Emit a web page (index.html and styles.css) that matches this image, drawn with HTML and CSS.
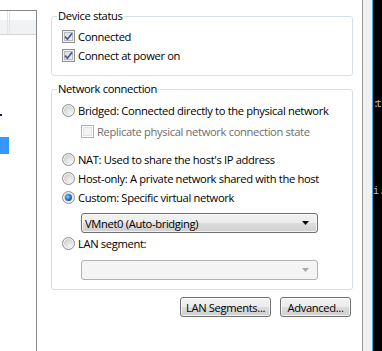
FILE: index.html
```html
<!DOCTYPE html>
<html lang="en">
<head>
    <meta charset="UTF-8">
    <title>Network Adapter</title>
    <link rel="stylesheet" href="styles.css">
</head>
<body>
    <div class="window">
        <aside class="device-list">
            <div class="list-header">
                <span class="col col-a"></span>
                <span class="col col-b"></span>
            </div>
            <div class="list-body">
                <span class="stray-dot"></span>
                <span class="selected-row"></span>
            </div>
        </aside>

        <main class="settings">
            <fieldset class="group">
                <legend>Device status</legend>
                <div class="group-body status-body">
                    <label class="option">
                        <span class="check"><svg width="9" height="9" viewBox="0 0 9 9"><path d="M1 4.6 L3.4 7.2 L8 1.4" fill="none" stroke="#4b5c98" stroke-width="1.7"/></svg></span>
                        Connected
                    </label>
                    <label class="option">
                        <span class="check"><svg width="9" height="9" viewBox="0 0 9 9"><path d="M1 4.6 L3.4 7.2 L8 1.4" fill="none" stroke="#4b5c98" stroke-width="1.7"/></svg></span>
                        Connect at power on
                    </label>
                </div>
            </fieldset>

            <fieldset class="group network">
                <legend>Network connection</legend>
                <div class="group-body network-body">
                    <label class="option"><span class="radio"></span>Bridged: Connected directly to the physical network</label>
                    <label class="option sub disabled"><span class="check off"></span>Replicate physical network connection state</label>
                    <label class="option nat"><span class="radio"></span>NAT: Used to share the host's IP address</label>
                    <label class="option"><span class="radio"></span>Host-only: A private network shared with the host</label>
                    <label class="option"><span class="radio on"></span>Custom: Specific virtual network</label>
                    <div class="select first">
                        <span>VMnet0 (Auto-bridging)</span>
                        <svg width="7" height="4" viewBox="0 0 7 4"><path d="M0 0h7l-3.5 4z" fill="#000"/></svg>
                    </div>
                    <label class="option lan"><span class="radio"></span>LAN segment:</label>
                    <div class="select second off">
                        <span></span>
                        <svg width="7" height="4" viewBox="0 0 7 4"><path d="M0 0h7l-3.5 4z" fill="#a8a8a8"/></svg>
                    </div>
                </div>
            </fieldset>

            <div class="actions">
                <button class="btn lan-btn">LAN Segments...</button>
                <button class="btn adv-btn">Advanced...</button>
            </div>
        </main>

        <div class="edge"></div>
        <div class="terminal">
            <span class="term-line">:t</span>
            <span class="term-line second-line">i .</span>
        </div>
    </div>
</body>
</html>
```

FILE: styles.css
```css
* {
    box-sizing: border-box;
}
html, body {
    margin: 0;
}
body {
    width: 382px;
    height: 351px;
    overflow: hidden;
    background: #fff;
    font-family: "Open Sans", "Noto Sans", sans-serif;
    font-size: 11.2px;
    letter-spacing: -0.35px;
    color: #000;
}
.window {
    display: flex;
    height: 351px;
}

/* left list pane */
.device-list {
    flex: none;
    width: 37px;
    margin-top: 10px;
    border-top: 1px solid #828790;
    border-right: 1px solid #828790;
}
.list-header {
    display: flex;
    height: 24px;
    border-bottom: 1px solid #d5d5d5;
    background: linear-gradient(#fff 0, #fff 38%, #f1f2f4 38%, #f1f2f4 100%);
}
.list-header .col {
    border-right: 1px solid #e3e4e6;
}
.col-a {
    width: 8px;
}
.col-b {
    width: 2px;
}
.list-body {
    display: flex;
    flex-direction: column;
}
.stray-dot {
    width: 2px;
    height: 2px;
    margin-top: 79px;
    background: #1a1a5a;
}
.selected-row {
    width: 9px;
    height: 17px;
    margin-top: 21px;
    background: #3399ff;
}

/* settings */
.settings {
    flex: none;
    width: 325px;
    padding: 9px 9px 0 14px;
}
.group {
    margin: 0;
    padding: 0;
    min-width: 0;
    border: 1px solid #d5dfe5;
    border-radius: 3px;
}
.group legend {
    margin-left: 5px;
    padding: 0 1px;
    line-height: 14px;
}
.group.network {
    margin-top: 6px;
}
.group-body {
    padding-left: 10px;
}
.status-body {
    padding-top: 4px;
    padding-bottom: 10px;
}
.network-body {
    padding-top: 5px;
    padding-bottom: 9px;
}
.option {
    display: flex;
    align-items: center;
    gap: 3px;
    height: 19px;
    white-space: nowrap;
}
.option.sub {
    margin: 2px 0 0 19px;
}
.option.nat {
    margin-top: 9px;
}
.option.lan {
    margin-top: 1px;
}
.disabled {
    color: #6d6d6d;
}

.check {
    flex: none;
    display: flex;
    align-items: center;
    justify-content: center;
    width: 13px;
    height: 13px;
    border: 1px solid #8e8f8f;
    background: linear-gradient(135deg, #d6d9de, #f6f7f8);
    box-shadow: inset 0 0 0 1px #f2f2f2, inset 0 0 0 2px #b5bac1;
}
.check.off {
    border-color: #b1b1b1;
    background: #f4f4f4;
    box-shadow: inset 0 0 0 1px #fff, inset 0 0 0 2px #e3e3e3;
}
.radio {
    flex: none;
    position: relative;
    width: 13px;
    height: 13px;
    border-radius: 50%;
    border: 1px solid #8e8f8f;
    background: radial-gradient(circle at 65% 70%, #f4f4f4 0, #dcdcdc 45%, #cfcfcf 70%);
    box-shadow: inset 0 0 0 1px #f6f6f6;
}
.radio.on::after {
    content: "";
    position: absolute;
    left: 2px;
    top: 2px;
    width: 7px;
    height: 7px;
    border-radius: 50%;
    background: radial-gradient(circle at 40% 40%, #8fd0ff 0, #2a78c8 45%, #0c3478 100%);
}

.select {
    display: flex;
    align-items: center;
    justify-content: space-between;
    width: 237px;
    height: 20px;
    margin-left: 19px;
    padding: 0 8px 0 3px;
    border: 1px solid #707070;
    border-radius: 3px;
    background: linear-gradient(#f2f2f2 0, #ebebeb 50%, #dddddd 50%, #cfcfcf 100%);
    box-shadow: inset 0 0 0 1px rgba(255, 255, 255, 0.7);
}
.select.first {
    margin-top: 6px;
}
.select.second {
    margin-top: 7px;
}
.select.off {
    border-color: #adb2b5;
    background: #f4f4f4;
    box-shadow: none;
}

.actions {
    display: flex;
    justify-content: flex-end;
    gap: 9px;
    margin: 7px 2px 0 0;
}
.btn {
    height: 20px;
    padding: 0;
    font: inherit;
    letter-spacing: inherit;
    color: #000;
    border: 1px solid #707070;
    border-radius: 3px;
    background: linear-gradient(#f2f2f2 0, #ebebeb 50%, #dddddd 50%, #cfcfcf 100%);
    box-shadow: inset 0 0 0 1px rgba(255, 255, 255, 0.7);
}
.lan-btn {
    width: 91px;
}
.adv-btn {
    width: 71px;
}

/* right window edge and the terminal behind it */
.edge {
    flex: none;
    width: 11px;
    border-left: 1px solid #9a9a9a;
    border-right: 1px solid #3fa9e8;
    background: #f0f0f0;
}
.terminal {
    flex: none;
    width: 9px;
    display: flex;
    flex-direction: column;
    padding-top: 99px;
    background: #000;
    color: #c0c0c0;
    font-family: "Liberation Mono", monospace;
    font-size: 10px;
    letter-spacing: -3px;
    line-height: 12px;
    white-space: nowrap;
}
.term-line.second-line {
    margin-top: 75px;
}
```
